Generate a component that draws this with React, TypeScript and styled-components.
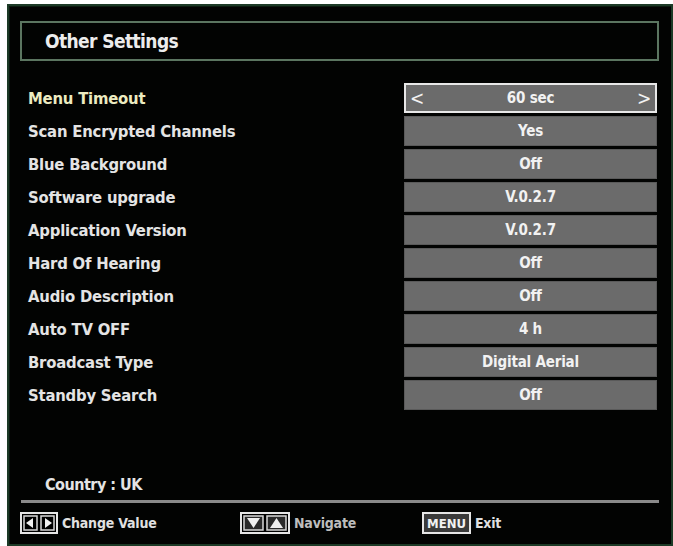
import React from 'react';
import styled, { createGlobalStyle } from 'styled-components';

const GlobalStyle = createGlobalStyle`
  html, body {
    margin: 0;
    padding: 0;
    background: #ffffff;
  }
  body {
    font-family: "Liberation Sans Narrow", "DejaVu Sans Condensed", "Liberation Sans", sans-serif;
  }
`;

interface Setting {
  label: string;
  value: string;
}

const settings: Setting[] = [
  { label: 'Menu Timeout', value: '60 sec' },
  { label: 'Scan Encrypted Channels', value: 'Yes' },
  { label: 'Blue Background', value: 'Off' },
  { label: 'Software upgrade', value: 'V.0.2.7' },
  { label: 'Application Version', value: 'V.0.2.7' },
  { label: 'Hard Of Hearing', value: 'Off' },
  { label: 'Audio Description', value: 'Off' },
  { label: 'Auto TV OFF', value: '4 h' },
  { label: 'Broadcast Type', value: 'Digital Aerial' },
  { label: 'Standby Search', value: 'Off' },
];

const LeftRightKey = () => (
  <svg width="38" height="22" viewBox="0 0 38 22">
    <rect x="1" y="1" width="36" height="20" fill="#000" stroke="#e6e6e6" strokeWidth="2" />
    <rect x="4" y="4" width="13" height="14" fill="#000" stroke="#d8d8d8" strokeWidth="1.5" />
    <rect x="21" y="4" width="13" height="14" fill="#000" stroke="#d8d8d8" strokeWidth="1.5" />
    <polygon points="13,6 13,16 6,11" fill="#f0f0f0" />
    <polygon points="25,6 25,16 32,11" fill="#f0f0f0" />
  </svg>
);

const UpDownKey = () => (
  <svg width="50" height="22" viewBox="0 0 50 22">
    <rect x="1" y="1" width="48" height="20" fill="#000" stroke="#e6e6e6" strokeWidth="2" />
    <rect x="4" y="4" width="19" height="14" fill="#2a2a2a" stroke="#d8d8d8" strokeWidth="1.5" />
    <rect x="27" y="4" width="19" height="14" fill="#2a2a2a" stroke="#d8d8d8" strokeWidth="1.5" />
    <polygon points="7,6 20,6 13.5,16" fill="#f0f0f0" />
    <polygon points="30,16 43,16 36.5,6" fill="#f0f0f0" />
  </svg>
);

const App: React.FC = () => {
  return (
    <>
      <GlobalStyle />
      <Page>
        <Screen>
          <TitleBox>Other Settings</TitleBox>
          <List>
            {settings.map((s, i) => (
              <Row key={s.label}>
                <Label $active={i === 0}>{s.label}</Label>
                <Value $active={i === 0}>
                  {i === 0 && <Arrow>&lt;</Arrow>}
                  <span>{s.value}</span>
                  {i === 0 && <Arrow>&gt;</Arrow>}
                </Value>
              </Row>
            ))}
          </List>
          <Country>Country : UK</Country>
          <Divider />
          <Footer>
            <Hint $width={220}>
              <LeftRightKey />
              <HintText>Change Value</HintText>
            </Hint>
            <Hint $width={182}>
              <UpDownKey />
              <HintText $dim>Navigate</HintText>
            </Hint>
            <Hint>
              <MenuKey>MENU</MenuKey>
              <HintText>Exit</HintText>
            </Hint>
          </Footer>
        </Screen>
      </Page>
    </>
  );
};
export default App;

const Page = styled.div`
  width: 673px;
  height: 546px;
  padding: 4px 0 0 7px;
  box-sizing: border-box;
  overflow: hidden;
`;

const Screen = styled.div`
  width: 666px;
  height: 542px;
  box-sizing: border-box;
  background: #020302;
  border: 2px solid #1c3a26;
  box-shadow: inset 1px 1px 0 #0c1a10;
  padding: 15px 12px 0 11px;
  display: flex;
  flex-direction: column;
`;

const TitleBox = styled.div`
  height: 40px;
  box-sizing: border-box;
  border: 2px solid #5b7560;
  display: flex;
  align-items: center;
  padding-left: 23px;
  color: #ececec;
  font-weight: bold;
  font-size: 19px;
  letter-spacing: -0.6px;
`;

const List = styled.div`
  margin-top: 22px;
  display: flex;
  flex-direction: column;
  gap: 3px;
`;

const Row = styled.div`
  height: 30px;
  display: flex;
  align-items: center;
  justify-content: space-between;
`;

const Label = styled.div<{ $active?: boolean }>`
  padding-left: 8px;
  font-weight: bold;
  font-size: 16.5px;
  letter-spacing: -0.2px;
  color: ${(p) => (p.$active ? '#ecebc0' : '#e4e4e4')};
`;

const Value = styled.div<{ $active?: boolean }>`
  width: 253px;
  height: 30px;
  box-sizing: border-box;
  margin-right: 2px;
  background: #6b6b6b;
  border: ${(p) => (p.$active ? '2px solid #e8e8e8' : '1px solid #5a5a5a')};
  display: flex;
  align-items: center;
  justify-content: ${(p) => (p.$active ? 'space-between' : 'center')};
  padding: 0 4px;
  color: #f2f2f2;
  font-weight: bold;
  font-size: 15px;
  letter-spacing: -0.2px;
`;

const Arrow = styled.span`
  font-size: 19px;
  font-weight: normal;
`;

const Country = styled.div`
  margin-top: auto;
  padding-left: 25px;
  font-weight: bold;
  font-size: 16px;
  letter-spacing: -0.5px;
  color: #e4e4e4;
  margin-bottom: 6px;
`;

const Divider = styled.div`
  height: 3px;
  background: #8a8a8a;
  margin: 0 0 9px 1px;
`;

const Footer = styled.div`
  height: 22px;
  margin-bottom: 10px;
  display: flex;
  align-items: center;
`;

const Hint = styled.div<{ $width?: number }>`
  display: flex;
  align-items: center;
  gap: 4px;
  width: ${(p) => (p.$width ? `${p.$width}px` : 'auto')};
`;

const HintText = styled.span<{ $dim?: boolean }>`
  font-weight: bold;
  font-size: 14px;
  letter-spacing: -0.2px;
  color: ${(p) => (p.$dim ? '#bdbdbd' : '#e0e0e0')};
`;

const MenuKey = styled.span`
  height: 22px;
  box-sizing: border-box;
  border: 2px solid #e6e6e6;
  background: #3a3a3a;
  color: #f2f2f2;
  font-weight: bold;
  font-size: 13px;
  padding: 0 3px;
  display: flex;
  align-items: center;
`;
